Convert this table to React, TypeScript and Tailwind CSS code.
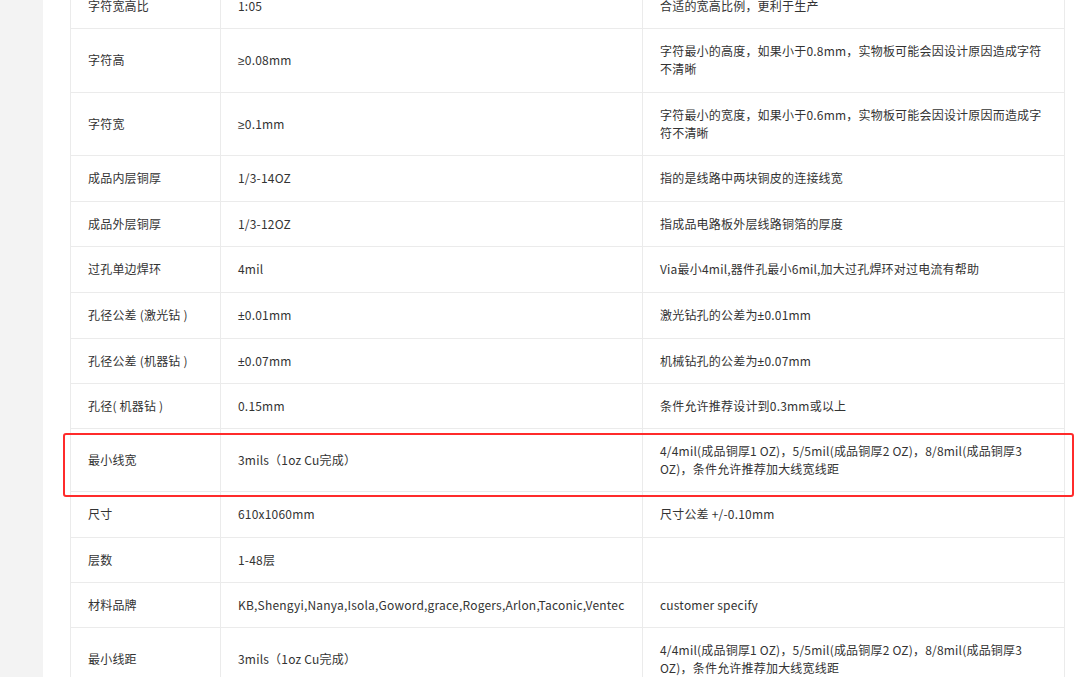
import React from 'react';

type Row = { name: string; value: string; note: string };

const rows: Row[] = [
  { name: '字符宽高比', value: '1:05', note: '合适的宽高比例，更利于生产' },
  {
    name: '字符高',
    value: '≥0.08mm',
    note: '字符最小的高度，如果小于0.8mm，实物板可能会因设计原因造成字符不清晰',
  },
  {
    name: '字符宽',
    value: '≥0.1mm',
    note: '字符最小的宽度，如果小于0.6mm，实物板可能会因设计原因而造成字符不清晰',
  },
  { name: '成品内层铜厚', value: '1/3-14OZ', note: '指的是线路中两块铜皮的连接线宽' },
  { name: '成品外层铜厚', value: '1/3-12OZ', note: '指成品电路板外层线路铜箔的厚度' },
  { name: '过孔单边焊环', value: '4mil', note: 'Via最小4mil,器件孔最小6mil,加大过孔焊环对过电流有帮助' },
  { name: '孔径公差 (激光钻 )', value: '±0.01mm', note: '激光钻孔的公差为±0.01mm' },
  { name: '孔径公差 (机器钻 )', value: '±0.07mm', note: '机械钻孔的公差为±0.07mm' },
  { name: '孔径( 机器钻 )', value: '0.15mm', note: '条件允许推荐设计到0.3mm或以上' },
  {
    name: '最小线宽',
    value: '3mils（1oz Cu完成）',
    note: '4/4mil(成品铜厚1 OZ)，5/5mil(成品铜厚2 OZ)，8/8mil(成品铜厚3 OZ)，条件允许推荐加大线宽线距',
  },
  { name: '尺寸', value: '610x1060mm', note: '尺寸公差 +/-0.10mm' },
  { name: '层数', value: '1-48层', note: '' },
  {
    name: '材料品牌',
    value: 'KB,Shengyi,Nanya,Isola,Goword,grace,Rogers,Arlon,Taconic,Ventec',
    note: 'customer specify',
  },
  {
    name: '最小线距',
    value: '3mils（1oz Cu完成）',
    note: '4/4mil(成品铜厚1 OZ)，5/5mil(成品铜厚2 OZ)，8/8mil(成品铜厚3 OZ)，条件允许推荐加大线宽线距',
  },
];

// rows that come out a pixel taller in the screenshot (the page's heights were fractional)
const taller = new Set([1, 3, 5, 6, 10]);

// ≥ and ± come out as full-width glyphs in the CJK font, so give them a latin face
function Txt({ s }: { s: string }) {
  const parts = s.split(/([≥±])/);
  return (
    <>
      {parts.map((p, i) =>
        p === '≥' || p === '±' ? (
          <span key={i} className="leading-none" style={{ fontFamily: '"Liberation Sans", sans-serif' }}>
            {p}
          </span>
        ) : (
          <React.Fragment key={i}>{p}</React.Fragment>
        ),
      )}
    </>
  );
}

export default function App() {
  return (
    <div
      className="flex h-[677px] w-[1080px] overflow-hidden bg-white text-[12px] leading-[18px] tracking-[0.2px] text-[#333]"
      style={{ fontFamily: '"Noto Sans CJK SC", "Noto Sans", sans-serif' }}
    >
      {/* left gutter */}
      <div className="w-[43px] shrink-0 bg-[#f3f3f3]" />

      <div className="relative flex-1 pl-[27px] pr-[16px]">
        <table className="-mt-[17px] w-[994px] table-fixed border-collapse">
          <colgroup>
            <col className="w-[150px]" />
            <col className="w-[422px]" />
            <col className="w-[422px]" />
          </colgroup>
          <tbody>
            {rows.map((r, i) => {
              const pad = taller.has(i) ? 'pt-[13px] pb-[14px]' : 'py-[13px]';
              return (
                <tr key={r.name}>
                  <td className={`border border-[#ebebeb] px-[17px] align-middle ${pad}`}>{r.name}</td>
                  <td className={`border border-[#ebebeb] px-[17px] align-middle whitespace-nowrap ${pad}`}>
                    <Txt s={r.value} />
                  </td>
                  <td className={`border border-[#ebebeb] px-[17px] align-middle ${pad}`}>
                    <Txt s={r.note} />
                  </td>
                </tr>
              );
            })}
          </tbody>
        </table>

        {/* highlight around 最小线宽 row */}
        <div className="pointer-events-none absolute left-[20px] top-[433px] h-[64px] w-[1011px] rounded-[3px] border-2 border-[#ff2b2b]" />
      </div>
    </div>
  );
}
